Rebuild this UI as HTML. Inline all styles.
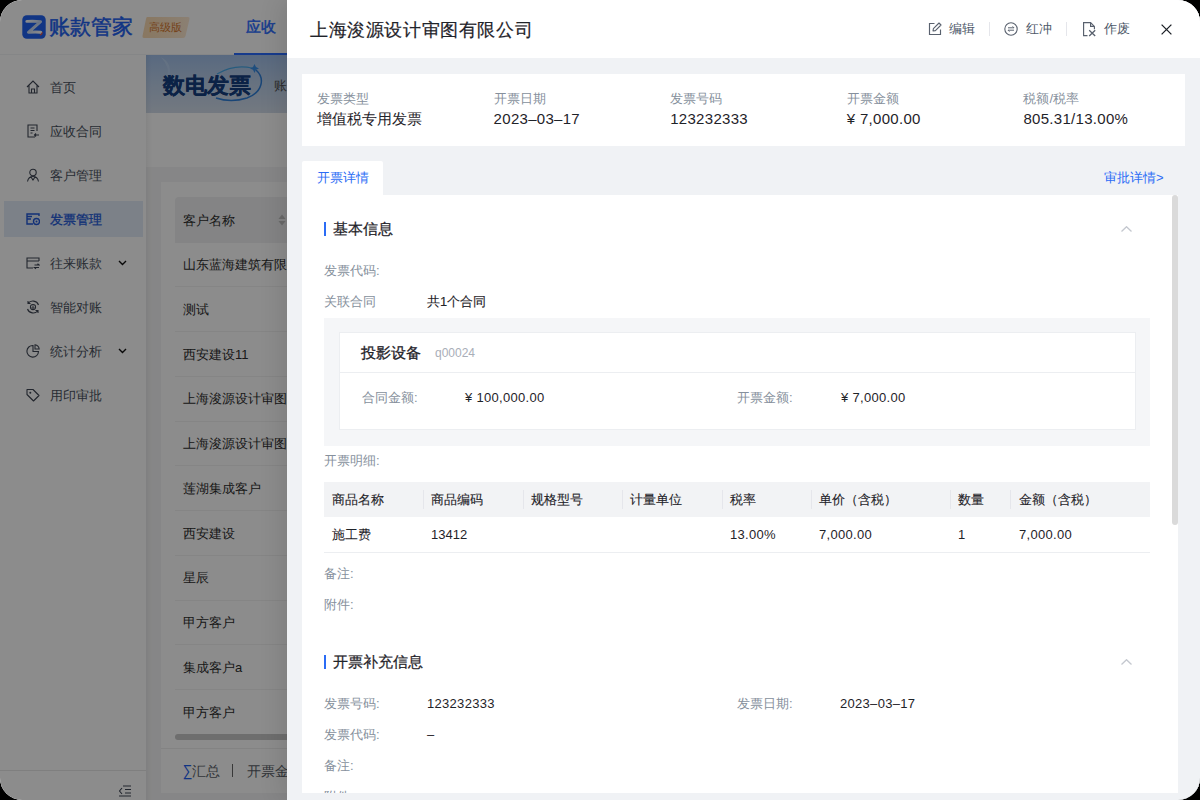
<!DOCTYPE html>
<html><head><meta charset="utf-8">
<style>
*{box-sizing:border-box;margin:0;padding:0}
html,body{width:1200px;height:800px;overflow:hidden;background:#000}
body{font-family:"Liberation Sans",sans-serif;color:#1f2329;position:relative}
.win{position:absolute;left:0;top:0;width:1200px;height:800px;border-radius:22px;overflow:hidden;background:#fff}
.abs{position:absolute;white-space:nowrap}
/* background app */
.hdr{left:0;top:0;width:1200px;height:55px;background:#fff;border-bottom:1px solid #f3f4f6}
.side{left:0;top:55px;width:146px;height:745px;background:#fff}
.content{left:146px;top:55px;width:1054px;height:745px;background:#f5f5f6}
.mi{position:absolute;left:4px;width:139px;height:36px;font-size:13px;line-height:36px;color:#4a5260}
.mi .tx{top:1px!important}
.mi .ic{position:absolute;left:22px;top:11px;width:14px;height:14px}
.mi .tx{position:absolute;left:46px;top:0}
.mi.act{background:#e2ebf8;color:#2158d8;-webkit-text-stroke:0.3px #2158d8}
.mask{left:0;top:0;width:1200px;height:800px;background:rgba(0,0,0,0.45)}
/* drawer */
.drawer{left:287px;top:0;width:913px;height:800px;background:#f0f2f5;box-shadow:-6px 0 22px rgba(0,0,0,0.1)}
.dh{left:0;top:0;width:913px;height:58px;background:#fff}
.lbl{color:#86909c}
</style></head>
<body>
<div class="win">
  <!-- ===== background app ===== -->
  <div class="abs hdr">
    <svg class="abs" style="left:22px;top:15px" width="24" height="24" viewBox="0 0 24 24">
      <rect x="0.3" y="0.3" width="23.4" height="23.4" rx="4.5" fill="#1f62f0"/>
      <defs><linearGradient id="zg" x1="0" y1="0" x2="1" y2="1"><stop offset="0" stop-color="#ffffff"/><stop offset="0.5" stop-color="#c4d6f2"/><stop offset="1" stop-color="#ffffff"/></linearGradient></defs>
      <path d="M4.8 6.4 Q12 6 18.6 6.6 L6.4 17.3 Q12.5 16.9 18.8 17.2" fill="none" stroke="url(#zg)" stroke-width="2.9" stroke-linecap="round" stroke-linejoin="round"/>
      <path d="M20.2 17.6 Q20 19.3 18.3 20" fill="none" stroke="#f0553a" stroke-width="1.1" stroke-linecap="round"/>
    </svg>
    <div class="abs" style="left:49px;top:13px;font-size:21px;line-height:28px;color:#1f62f0;-webkit-text-stroke:0.5px #1f62f0;letter-spacing:0px">账款管家</div>
    <svg class="abs" style="left:142px;top:17px" width="48" height="21" viewBox="0 0 48 21">
      <defs><linearGradient id="bdg" x1="0" x2="1" y1="0" y2="0"><stop offset="0" stop-color="#f9d9b0"/><stop offset="1" stop-color="#fde9d2"/></linearGradient></defs>
      <path d="M5 0 H46 Q48 0 47.5 2 L43.5 19 Q43 21 41 21 H2 Q0 21 0.5 19 L4 2 Q4.5 0 5 0Z" fill="url(#bdg)"/>
    </svg>
    <div class="abs" style="left:149px;top:20px;font-size:11px;line-height:14px;color:#d5782e">高级版</div>
    <div class="abs" style="left:246px;top:17px;font-size:15px;line-height:20px;color:#2a6cff;-webkit-text-stroke:0.45px #2a6cff">应收</div>
    <div class="abs" style="left:234px;top:53px;width:80px;height:2px;background:#2a6cff"></div>
  </div>
  <div class="abs side">
    <div class="mi" style="top:14px"><svg class="ic" viewBox="0 0 14 14"><path d="M1 7 L7 1 L13 7 M3 5.5 V13 H11 V5.5 M5.5 13 V9 H8.5 V13" fill="none" stroke="#3f4654" stroke-width="1.1"/></svg><span class="tx">首页</span></div>
    <div class="mi" style="top:58px"><svg class="ic" viewBox="0 0 14 14"><path d="M9 13 H2 V1 H11 V7 M4.5 4 H8.5 M4.5 6.5 H8.5 M4.5 9 H6.5 M13 11 H8.5 M10 9.5 L8.5 11 L10 12.5" fill="none" stroke="#3f4654" stroke-width="1.1"/></svg><span class="tx">应收合同</span></div>
    <div class="mi" style="top:102px"><svg class="ic" viewBox="0 0 14 14"><circle cx="7" cy="4.5" r="3.2" fill="none" stroke="#3f4654" stroke-width="1.1"/><path d="M1.5 13.5 Q2.5 8.5 7 8.5 Q11.5 8.5 12.5 13.5 M5 9 L7 12 L9 9" fill="none" stroke="#3f4654" stroke-width="1.1"/></svg><span class="tx">客户管理</span></div>
    <div class="mi act" style="top:146px"><svg class="ic" viewBox="0 0 14 14"><path d="M13 4 V2 H1 V12 H7 M1 7 H5 M1 4.5 H6" fill="none" stroke="#2158d8" stroke-width="1.4"/><circle cx="10.5" cy="9.5" r="3" fill="none" stroke="#2158d8" stroke-width="1.4"/><circle cx="10.5" cy="9.5" r="1" fill="#2158d8"/></svg><span class="tx">发票管理</span></div>
    <div class="mi" style="top:190px"><svg class="ic" viewBox="0 0 14 14"><path d="M13 5 V2 H1 V12 H7 M1 5 H13 M8.5 9 H13 L11.5 7.8 M13 11.5 H8.5 L10 12.7" fill="none" stroke="#3f4654" stroke-width="1.1"/></svg><span class="tx">往来账款</span><svg class="abs" style="left:114px;top:15px" width="9" height="6" viewBox="0 0 9 6"><path d="M1 1 L4.5 4.5 L8 1" fill="none" stroke="#111" stroke-width="1.4"/></svg></div>
    <div class="mi" style="top:234px"><svg class="ic" viewBox="0 0 14 14"><path d="M12.5 5 A6 6 0 0 0 2 3.5 M1.5 9 A6 6 0 0 0 12 10.5 M2 1 V3.5 H4.5 M12 13 V10.5 H9.5" fill="none" stroke="#3f4654" stroke-width="1.1"/><circle cx="7" cy="7" r="2.6" fill="none" stroke="#3f4654" stroke-width="1.05"/><path d="M7 5.5 V8.5 M5.8 7.3 L7 8.5 L8.2 7.3" fill="none" stroke="#3f4654" stroke-width="1"/></svg><span class="tx">智能对账</span></div>
    <div class="mi" style="top:278px"><svg class="ic" viewBox="0 0 14 14"><path d="M7 1.5 A5.8 5.8 0 1 0 12.5 7.5 H7 Z" fill="none" stroke="#3f4654" stroke-width="1.1"/><path d="M9 0.8 A5 5 0 0 1 13.2 5 H9 Z" fill="none" stroke="#3f4654" stroke-width="1.05"/></svg><span class="tx">统计分析</span><svg class="abs" style="left:114px;top:15px" width="9" height="6" viewBox="0 0 9 6"><path d="M1 1 L4.5 4.5 L8 1" fill="none" stroke="#111" stroke-width="1.4"/></svg></div>
    <div class="mi" style="top:322px"><svg class="ic" viewBox="0 0 14 14"><path d="M1 1.5 H7 L13 7.5 L7.5 13 L1 6.5 Z" fill="none" stroke="#3f4654" stroke-width="1.1" stroke-linejoin="round"/><circle cx="4.3" cy="4.8" r="1" fill="#3f4654"/></svg><span class="tx">用印审批</span></div>
    <div class="abs" style="left:0;top:715px;width:146px;height:1px;background:#e8e8e8"></div>
    <svg class="abs" style="left:118px;top:730px" width="14" height="12" viewBox="0 0 14 12"><path d="M5 1 H13 M7 4.5 H13 M7 8 H13 M1 11 H13 M4 3 L1.5 6 L4 9" fill="none" stroke="#3f4654" stroke-width="1.1"/></svg>
  </div>
  <div class="abs content">
    <div class="abs" style="left:0;top:0;width:1054px;height:58px;background:linear-gradient(180deg,#a2c0ea 0%,#bcd0ea 50%,#d2dcea 100%)"></div>
    <svg class="abs" style="left:0;top:0" width="141" height="58" viewBox="0 0 141 58">
      <path d="M15 2 Q28 9 22 24 Q24 12 15 2Z" fill="#b8d0f0" opacity="0.9"/>
      <path d="M71 19 Q88 9 106 13" fill="none" stroke="#48a8e6" stroke-width="1.1"/>
      <path d="M110 15 C119 23 117 37 101 43 Q85 48 70 43" fill="none" stroke="#2f7fd8" stroke-width="1.5"/>
      <path d="M108.5 9 L110 12 L113 13.5 L110 14.8 L108.5 18 L107 14.8 L104 13.5 L107 12 Z" fill="#3a8fe6"/>
    </svg>
    <div class="abs" style="left:17px;top:17px;font-size:21.5px;line-height:28px;color:#153e80;font-weight:bold;letter-spacing:0px;-webkit-text-stroke:0.2px #153e80">数电发票</div>
    <div class="abs" style="left:128px;top:22px;font-size:13px;line-height:18px;color:#555">账款管家</div>
    <div class="abs" style="left:0;top:58px;width:1054px;height:54px;background:#fff"></div>
    <div class="abs" style="left:0;top:0;width:6px;height:745px;background:linear-gradient(90deg,rgba(0,0,0,0.05),rgba(0,0,0,0))"></div>
    <div class="abs" style="left:15px;top:127px;width:1039px;height:611px;background:#fff">
      <div class="abs" style="left:14px;top:15px;width:1025px;height:45.5px;background:#f0f1f3;border-radius:4px 0 0 0"></div>
      <div class="abs" style="left:22px;top:29.5px;font-size:13px;line-height:18px;color:#2e2e2e">客户名称</div>
      <svg class="abs" style="left:116.5px;top:32px" width="8" height="12" viewBox="0 0 8 12"><path d="M4 0.5 L7.6 5 H0.4Z M4 11.5 L7.6 7 H0.4Z" fill="#c2c2c2"/></svg>
      <div class="abs" style="left:22px;top:74.00px;font-size:13px;line-height:18px;color:#2e2e2e">山东蓝海建筑有限公司</div><div class="abs" style="left:14px;top:104.30px;width:1025px;height:1px;background:#f3f3f3"></div><div class="abs" style="left:22px;top:118.75px;font-size:13px;line-height:18px;color:#2e2e2e">测试</div><div class="abs" style="left:14px;top:149.05px;width:1025px;height:1px;background:#f3f3f3"></div><div class="abs" style="left:22px;top:163.50px;font-size:13px;line-height:18px;color:#2e2e2e">西安建设11</div><div class="abs" style="left:14px;top:193.80px;width:1025px;height:1px;background:#f3f3f3"></div><div class="abs" style="left:22px;top:208.25px;font-size:13px;line-height:18px;color:#2e2e2e">上海浚源设计审图有限公司</div><div class="abs" style="left:14px;top:238.55px;width:1025px;height:1px;background:#f3f3f3"></div><div class="abs" style="left:22px;top:253.00px;font-size:13px;line-height:18px;color:#2e2e2e">上海浚源设计审图有限公司</div><div class="abs" style="left:14px;top:283.30px;width:1025px;height:1px;background:#f3f3f3"></div><div class="abs" style="left:22px;top:297.75px;font-size:13px;line-height:18px;color:#2e2e2e">莲湖集成客户</div><div class="abs" style="left:14px;top:328.05px;width:1025px;height:1px;background:#f3f3f3"></div><div class="abs" style="left:22px;top:342.50px;font-size:13px;line-height:18px;color:#2e2e2e">西安建设</div><div class="abs" style="left:14px;top:372.80px;width:1025px;height:1px;background:#f3f3f3"></div><div class="abs" style="left:22px;top:387.25px;font-size:13px;line-height:18px;color:#2e2e2e">星辰</div><div class="abs" style="left:14px;top:417.55px;width:1025px;height:1px;background:#f3f3f3"></div><div class="abs" style="left:22px;top:432.00px;font-size:13px;line-height:18px;color:#2e2e2e">甲方客户</div><div class="abs" style="left:14px;top:462.30px;width:1025px;height:1px;background:#f3f3f3"></div><div class="abs" style="left:22px;top:476.75px;font-size:13px;line-height:18px;color:#2e2e2e">集成客户a</div><div class="abs" style="left:14px;top:507.05px;width:1025px;height:1px;background:#f3f3f3"></div><div class="abs" style="left:22px;top:521.50px;font-size:13px;line-height:18px;color:#2e2e2e">甲方客户</div>
      <div class="abs" style="left:14px;top:552px;width:1025px;height:6px;border-radius:3px;background:#c8c8c8"></div>
      <div class="abs" style="left:0;top:566px;width:1039px;height:1px;background:#eee"></div>
      <div class="abs" style="left:22px;top:580px;font-size:14px;line-height:18px;color:#5a5f68"><span style="color:#1f62f0;font-size:16px;display:inline-block;transform:scaleX(0.85);margin-left:-1px;margin-right:-1px">&#8721;</span>汇总</div><div class="abs" style="left:71px;top:582px;width:1px;height:13px;background:#666"></div><div class="abs" style="left:86px;top:580px;font-size:14px;line-height:18px;color:#5a5f68">开票金额</div>
    </div>
  </div>
  <div class="abs mask"></div>
  <!-- ===== drawer ===== -->
  <div class="abs drawer">
    <div class="abs dh">
      <div class="abs" style="left:23px;top:16.5px;font-size:18px;letter-spacing:0.6px;line-height:26px;color:#1f2329;-webkit-text-stroke:0.2px #1f2329">上海浚源设计审图有限公司</div>
      <svg class="abs" style="left:641px;top:22px" width="14" height="14" viewBox="0 0 14 14"><path d="M6.5 1.5 H1.5 V12.5 H12.5 V7.5" fill="none" stroke="#59616e" stroke-width="1.15"/><path d="M5 9 L5.4 6.6 L11 1 L13 3 L7.4 8.6 Z" fill="none" stroke="#59616e" stroke-width="1.1" stroke-linejoin="round"/></svg>
      <div class="abs" style="left:662px;top:20px;font-size:13px;line-height:18px;color:#4e5969">编辑</div>
      <div class="abs" style="left:701.5px;top:22px;width:1px;height:14px;background:#e5e6eb"></div>
      <svg class="abs" style="left:717px;top:22px" width="14" height="14" viewBox="0 0 14 14"><circle cx="7" cy="7" r="6.2" fill="none" stroke="#59616e" stroke-width="1.1"/><path d="M4 5.8 H10 L8.6 4.4 M10 8.2 H4 L5.4 9.6" fill="none" stroke="#59616e" stroke-width="1"/></svg>
      <div class="abs" style="left:739px;top:20px;font-size:13px;line-height:18px;color:#4e5969">红冲</div>
      <div class="abs" style="left:779px;top:22px;width:1px;height:14px;background:#e5e6eb"></div>
      <svg class="abs" style="left:795px;top:21px" width="15" height="16" viewBox="0 0 15 16"><path d="M5.5 14.6 H1.6 V1.6 H8.6 L12.4 5.4 V8.2 M8.6 1.6 V5.4 H12.4" fill="none" stroke="#59616e" stroke-width="1.15"/><path d="M7.2 9.2 L13.2 15 M13.2 9.2 L7.2 15" fill="none" stroke="#59616e" stroke-width="1.3"/></svg>
      <div class="abs" style="left:817px;top:20px;font-size:13px;line-height:18px;color:#4e5969">作废</div>
      <svg class="abs" style="left:874px;top:24px" width="11" height="11" viewBox="0 0 11 11"><path d="M0.6 0.6 L10.4 10.4 M10.4 0.6 L0.6 10.4" fill="none" stroke="#1f2329" stroke-width="1.3"/></svg>
    </div>
    <div class="abs" style="left:15px;top:74px;width:883px;height:72px;background:#fff"></div>
<div class="abs lbl" style="left:30.0px;top:90px;font-size:13px;line-height:18px">发票类型</div><div class="abs" style="left:30.0px;top:108px;font-size:15px;line-height:22px;color:#1f2329">增值税专用发票</div><div class="abs lbl" style="left:206.6px;top:90px;font-size:13px;line-height:18px">开票日期</div><div class="abs" style="left:206.6px;top:108px;font-size:15px;line-height:22px;color:#1f2329"><span style="letter-spacing:0.3px">2023–03–17</span></div><div class="abs lbl" style="left:383.2px;top:90px;font-size:13px;line-height:18px">发票号码</div><div class="abs" style="left:383.2px;top:108px;font-size:15px;line-height:22px;color:#1f2329;letter-spacing:0.3px">123232333</div><div class="abs lbl" style="left:559.8px;top:90px;font-size:13px;line-height:18px">开票金额</div><div class="abs" style="left:559.8px;top:108px;font-size:15px;line-height:22px;color:#1f2329;letter-spacing:0.3px">¥ 7,000.00</div><div class="abs lbl" style="left:736.4px;top:90px;font-size:13px;line-height:18px">税额/税率</div><div class="abs" style="left:736.4px;top:108px;font-size:15px;line-height:22px;color:#1f2329;letter-spacing:0.3px">805.31/13.00%</div>
    <div class="abs" style="left:15px;top:161px;width:81px;height:35px;background:#fff;border-radius:2px 2px 0 0"></div>
    <div class="abs" style="left:30px;top:169px;font-size:13px;line-height:18px;color:#2b6cf5">开票详情</div>
    <div class="abs" style="left:817px;top:169px;font-size:13px;line-height:18px;color:#2b6cf5">审批详情&gt;</div>
    <div class="abs" style="left:15px;top:195px;width:876px;height:598px;background:#fff;overflow:hidden">
      <div class="abs" style="left:22px;top:27px;width:2px;height:14px;background:#2b6cf5"></div><div class="abs" style="left:31px;top:23px;font-size:15px;line-height:22px;color:#1f2329;-webkit-text-stroke:0.25px #1f2329">基本信息</div><svg class="abs" style="left:819px;top:31px" width="11" height="6" viewBox="0 0 11 6"><path d="M0.5 5.5 L5.5 0.7 L10.5 5.5" fill="none" stroke="#c4c8cf" stroke-width="1.3"/></svg><div class="abs lbl" style="left:22px;top:67.0px;font-size:13px;line-height:18px;">发票代码:</div><div class="abs lbl" style="left:22px;top:98.0px;font-size:13px;line-height:18px;">关联合同</div><div class="abs val" style="left:125px;top:98.0px;font-size:13px;line-height:18px;color:#1f2329;-webkit-text-stroke:0.12px #1f2329">共1个合同</div><div class="abs" style="left:22px;top:122.5px;width:826px;height:128px;background:#f5f6f8"></div><div class="abs" style="left:37px;top:137px;width:797px;height:98px;background:#fff;border:1px solid #eceef1"></div><div class="abs" style="left:38px;top:177px;width:795px;height:1px;background:#eceef1"></div><div class="abs val" style="left:59px;top:148.5px;font-size:15px;line-height:18px;color:#1f2329;-webkit-text-stroke:0.3px #1f2329">投影设备</div><div class="abs lbl" style="left:133px;top:149.0px;font-size:12px;line-height:18px;color:#a9aeb8">q00024</div><div class="abs lbl" style="left:60px;top:194.0px;font-size:13px;line-height:18px;">合同金额:</div><div class="abs val" style="left:163px;top:194.0px;font-size:13px;line-height:18px;color:#1f2329;letter-spacing:0.3px">¥ 100,000.00</div><div class="abs lbl" style="left:435px;top:194.0px;font-size:13px;line-height:18px;">开票金额:</div><div class="abs val" style="left:539px;top:194.0px;font-size:13px;line-height:18px;color:#1f2329;letter-spacing:0.3px">¥ 7,000.00</div><div class="abs lbl" style="left:22px;top:257.0px;font-size:13px;line-height:18px;">开票明细:</div><div class="abs" style="left:22px;top:287px;width:826px;height:35px;background:#f2f3f5"></div><div class="abs" style="left:22px;top:357px;width:826px;height:1px;background:#eceef1"></div><div class="abs val" style="left:30px;top:295.5px;font-size:13px;line-height:18px;color:#1f2329;-webkit-text-stroke:0.12px #1f2329">商品名称</div><div class="abs val" style="left:129px;top:295.5px;font-size:13px;line-height:18px;color:#1f2329;-webkit-text-stroke:0.12px #1f2329">商品编码</div><div class="abs val" style="left:229px;top:295.5px;font-size:13px;line-height:18px;color:#1f2329;-webkit-text-stroke:0.12px #1f2329">规格型号</div><div class="abs val" style="left:328px;top:295.5px;font-size:13px;line-height:18px;color:#1f2329;-webkit-text-stroke:0.12px #1f2329">计量单位</div><div class="abs val" style="left:428px;top:295.5px;font-size:13px;line-height:18px;color:#1f2329;-webkit-text-stroke:0.12px #1f2329">税率</div><div class="abs val" style="left:517px;top:295.5px;font-size:13px;line-height:18px;color:#1f2329;-webkit-text-stroke:0.12px #1f2329">单价（含税）</div><div class="abs val" style="left:656px;top:295.5px;font-size:13px;line-height:18px;color:#1f2329;-webkit-text-stroke:0.12px #1f2329">数量</div><div class="abs val" style="left:717px;top:295.5px;font-size:13px;line-height:18px;color:#1f2329;-webkit-text-stroke:0.12px #1f2329">金额（含税）</div><div class="abs" style="left:121px;top:295px;width:1px;height:19px;background:#e5e6eb"></div><div class="abs" style="left:221px;top:295px;width:1px;height:19px;background:#e5e6eb"></div><div class="abs" style="left:320px;top:295px;width:1px;height:19px;background:#e5e6eb"></div><div class="abs" style="left:420px;top:295px;width:1px;height:19px;background:#e5e6eb"></div><div class="abs" style="left:509px;top:295px;width:1px;height:19px;background:#e5e6eb"></div><div class="abs" style="left:648px;top:295px;width:1px;height:19px;background:#e5e6eb"></div><div class="abs" style="left:708px;top:295px;width:1px;height:19px;background:#e5e6eb"></div><div class="abs val" style="left:30px;top:331.0px;font-size:13px;line-height:18px;color:#1f2329;">施工费</div><div class="abs val" style="left:129px;top:331.0px;font-size:13px;line-height:18px;color:#1f2329;">13412</div><div class="abs val" style="left:428px;top:331.0px;font-size:13px;line-height:18px;color:#1f2329;letter-spacing:0.3px">13.00%</div><div class="abs val" style="left:517px;top:331.0px;font-size:13px;line-height:18px;color:#1f2329;letter-spacing:0.3px">7,000.00</div><div class="abs val" style="left:656px;top:331.0px;font-size:13px;line-height:18px;color:#1f2329;">1</div><div class="abs val" style="left:717px;top:331.0px;font-size:13px;line-height:18px;color:#1f2329;letter-spacing:0.3px">7,000.00</div><div class="abs lbl" style="left:22px;top:370.0px;font-size:13px;line-height:18px;">备注:</div><div class="abs lbl" style="left:22px;top:401.0px;font-size:13px;line-height:18px;">附件:</div><div class="abs" style="left:22px;top:460px;width:2px;height:14px;background:#2b6cf5"></div><div class="abs" style="left:31px;top:456px;font-size:15px;line-height:22px;color:#1f2329;-webkit-text-stroke:0.25px #1f2329">开票补充信息</div><svg class="abs" style="left:819px;top:464px" width="11" height="6" viewBox="0 0 11 6"><path d="M0.5 5.5 L5.5 0.7 L10.5 5.5" fill="none" stroke="#c4c8cf" stroke-width="1.3"/></svg><div class="abs lbl" style="left:22px;top:500.0px;font-size:13px;line-height:18px;">发票号码:</div><div class="abs val" style="left:125px;top:500.0px;font-size:13px;line-height:18px;color:#1f2329;letter-spacing:0.3px">123232333</div><div class="abs lbl" style="left:435px;top:500.0px;font-size:13px;line-height:18px;">发票日期:</div><div class="abs val" style="left:538px;top:500.0px;font-size:13px;line-height:18px;color:#1f2329;"><span style="letter-spacing:0.3px">2023–03–17</span></div><div class="abs lbl" style="left:22px;top:531.0px;font-size:13px;line-height:18px;">发票代码:</div><div class="abs val" style="left:125px;top:531.0px;font-size:13px;line-height:18px;color:#1f2329;">–</div><div class="abs lbl" style="left:22px;top:562.0px;font-size:13px;line-height:18px;">备注:</div><div class="abs lbl" style="left:22px;top:593.0px;font-size:13px;line-height:18px;">附件:</div><div class="abs" style="left:870px;top:0px;width:6px;height:330px;border-radius:3px;background:#dadada"></div>
    </div>
  </div>
</div>
</body></html>
